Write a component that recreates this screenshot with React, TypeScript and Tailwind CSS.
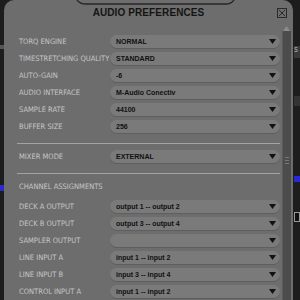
import React from 'react';

type Row = { label: string; value: string };

const audioRows: Row[] = [
  { label: 'TORQ ENGINE', value: 'NORMAL' },
  { label: 'TIMESTRETCHING QUALITY', value: 'STANDARD' },
  { label: 'AUTO-GAIN', value: '-6' },
  { label: 'AUDIO INTERFACE', value: 'M-Audio Conectiv' },
  { label: 'SAMPLE RATE', value: '44100' },
  { label: 'BUFFER SIZE', value: '256' },
];

const channelRows: Row[] = [
  { label: 'DECK A OUTPUT', value: 'output 1 -- output 2' },
  { label: 'DECK B OUTPUT', value: 'output 3 -- output 4' },
  { label: 'SAMPLER OUTPUT', value: '' },
  { label: 'LINE INPUT A', value: 'input 1 -- input 2' },
  { label: 'LINE INPUT B', value: 'input 3 -- input 4' },
  { label: 'CONTROL INPUT A', value: 'input 1 -- input 2' },
];

// dropdown with the little black arrow on the right
const Dropdown = ({ value }: { value: string }) => (
  <div className="w-[170px] h-[13px] rounded-full bg-[#7a7a7a] shadow-[0_1px_0_#5e5e5e] flex items-center pl-[6px] pr-[4px]">
    <span className="flex-1 text-[7px] font-bold text-[#111] leading-none whitespace-nowrap [font-family:'Liberation_Sans',Arial,sans-serif]">
      {value}
    </span>
    <svg width="7" height="5" viewBox="0 0 7 5">
      <path d="M0 0 H7 L3.5 5 Z" fill="#111" />
    </svg>
  </div>
);

const SettingRow = ({ row }: { row: Row }) => (
  <div className="h-[17px] flex items-center">
    <span className="w-[91px] text-[7.5px] text-[#c6c6c6] whitespace-nowrap leading-none [font-family:'DejaVu_Sans_Condensed','DejaVu_Sans',sans-serif] [font-stretch:condensed]">
      {row.label}
    </span>
    <Dropdown value={row.value} />
  </div>
);

const Separator = () => (
  <div className="h-[13px] pt-[8px] -ml-[2px]">
    <div className="h-px w-[263px] bg-[#a3a3a3]" />
  </div>
);

export default function App() {
  return (
    <div className="w-[300px] h-[300px] bg-[#1d1d1d] flex overflow-hidden relative">
      {/* bits of the app behind, left side */}
      <div className="w-[4px] h-full flex flex-col">
        <div className="h-[45px]" />
        <div className="h-[4px] bg-[#555]" />
        <div className="h-[136px]" />
        <div className="h-[6px] bg-[#2a2ad0]" />
      </div>

      {/* preferences panel */}
      <div className="w-[289px] h-full rounded-t-[10px] bg-[#6d6d6d] flex flex-col relative">
        <svg className="absolute left-[70px] top-0" width="165" height="6" viewBox="0 0 165 6">
          <path d="M3 0 Q6 4 12 4 H152 Q157 4 160 0" fill="none" stroke="#262626" strokeWidth="1.3" />
        </svg>

        <div className="h-[26px] flex items-center justify-center relative">
          <span className="text-[10px] font-bold text-[#141414] tracking-[0.1px] [font-family:'Liberation_Sans',Arial,sans-serif]">
            AUDIO PREFERENCES
          </span>
          <div className="absolute right-[6px] top-[8px] w-[10px] h-[10px] border border-[#2a2a2a] flex items-center justify-center">
            <svg width="8" height="8" viewBox="0 0 8 8">
              <path d="M1 1 L7 7 M7 1 L1 7" stroke="#2a2a2a" strokeWidth="1" />
            </svg>
          </div>
        </div>

        <div className="flex-1 flex">
          <div className="w-[278px] pl-[15px] pt-[8px] flex flex-col">
            {audioRows.map((row, i) => (
              <SettingRow key={i} row={row} />
            ))}
            <Separator />
            <SettingRow row={{ label: 'MIXER MODE', value: 'EXTERNAL' }} />
            <Separator />
            <div className="h-[17px] flex items-center text-[7.5px] text-[#c6c6c6] leading-none [font-family:'DejaVu_Sans_Condensed','DejaVu_Sans',sans-serif] [font-stretch:condensed]">
              CHANNEL ASSIGNMENTS
            </div>
            <div className="h-[3px]" />
            {channelRows.map((row, i) => (
              <SettingRow key={i} row={row} />
            ))}
          </div>

          {/* scrollbar */}
          <div className="w-[9px] flex flex-col">
            <div className="h-[6px] flex items-center justify-center">
              <svg width="7" height="5" viewBox="0 0 7 5">
                <path d="M0 5 H7 L3.5 0 Z" fill="#8c8c8c" />
              </svg>
            </div>
            <div className="flex-1 bg-[#4c4c4c] border-l border-[#5a5a5a] flex flex-col items-center pt-[126px]">
              <div className="w-[4px] flex flex-col gap-[2px]">
                <div className="h-px bg-[#777]" />
                <div className="h-px bg-[#777]" />
                <div className="h-px bg-[#777]" />
              </div>
            </div>
          </div>
        </div>
      </div>

      {/* bits of the app behind, right side */}
      <div className="flex-1 h-full flex flex-col pl-[1px]">
        <div className="h-[46px]" />
        <div className="h-[12px] bg-[#3a3a3a] text-[7px] text-[#bbb] leading-none">S</div>
        <div className="h-[38px]" />
        <div className="h-[10px] bg-[#333]" />
        <div className="h-[70px]" />
        <div className="h-[6px] bg-[#2a2ad0]" />
        <div className="h-[30px]" />
        <div className="h-[10px] border border-[#999] bg-[#111]" />
      </div>
    </div>
  );
}
